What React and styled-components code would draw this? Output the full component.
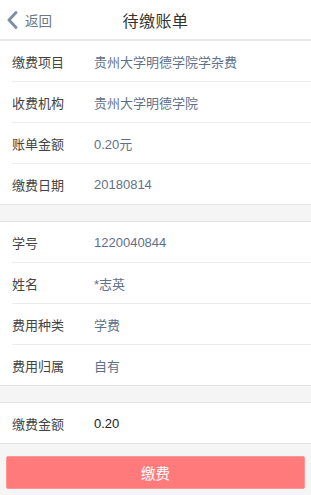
import React from 'react';
import styled, { createGlobalStyle } from 'styled-components';

const GlobalStyle = createGlobalStyle`
  html, body {
    margin: 0;
    padding: 0;
    background: #f5f5f5;
    font-family: "Liberation Sans", "Noto Sans CJK SC", sans-serif;
  }
`;

const Page = styled.div`
  width: 311px;
  height: 495px;
  background: #f5f5f5;
  overflow: hidden;
`;

const Header = styled.header`
  position: relative;
  height: 39px;
  background: #fff;
  border-bottom: 2px solid #e8e8e8;
  display: flex;
  align-items: center;
  justify-content: center;
`;

const Back = styled.div`
  position: absolute;
  left: 7px;
  top: 0;
  height: 100%;
  display: flex;
  align-items: center;
  gap: 7px;
  color: #6b7785;
  font-size: 13.5px;
`;

const Title = styled.h1`
  margin: 0;
  font-size: 16px;
  font-weight: normal;
  color: #333;
  letter-spacing: 0.5px;
`;

const Section = styled.section`
  background: #fff;
  border-top: 1px solid #e3e3e3;
  border-bottom: 1px solid #e3e3e3;
  margin-top: ${p => p.$gap}px;
  &:first-of-type {
    border-top: none;
  }
`;

const Row = styled.div`
  height: 40px;
  margin-left: 12px;
  display: flex;
  align-items: center;
  & + & {
    border-top: 1px solid #ececec;
  }
`;

const Label = styled.span`
  width: 82px;
  font-size: 13px;
  color: #444;
`;

const Value = styled.span`
  font-size: 13px;
  color: ${p => (p.$strong ? '#222' : '#5f718a')};
`;

const PayButton = styled.button`
  display: block;
  margin: 12px 6px 0;
  width: 299px;
  height: 33px;
  border: 1px solid #ff9595;
  border-radius: 2px;
  background: #ff7b7b;
  color: #fff;
  font-family: "Noto Sans CJK SC", sans-serif;
  font-size: 14.5px;
`;

const bill = [
  ['缴费项目', '贵州大学明德学院学杂费'],
  ['收费机构', '贵州大学明德学院'],
  ['账单金额', '0.20元'],
  ['缴费日期', '20180814'],
];

const student = [
  ['学号', '1220040844'],
  ['姓名', '*志英'],
  ['费用种类', '学费'],
  ['费用归属', '自有'],
];

const Rows = ({ items }) =>
  items.map(([label, value]) => (
    <Row key={label}>
      <Label>{label}</Label>
      <Value>{value}</Value>
    </Row>
  ));

export default function App() {
  return (
    <Page>
      <GlobalStyle />
      <Header>
        <Back>
          <svg width="11" height="18" viewBox="0 0 11 18">
            <path d="M9 1.6 L2 9 L9 16.4" fill="none" stroke="#7d8fa3" strokeWidth="2.9" strokeLinecap="round" strokeLinejoin="round" />
          </svg>
          <span>返回</span>
        </Back>
        <Title>待缴账单</Title>
      </Header>
      <Section $gap={0}>
        <Rows items={bill} />
      </Section>
      <Section $gap={16}>
        <Rows items={student} />
      </Section>
      <Section $gap={16}>
        <Row>
          <Label>缴费金额</Label>
          <Value $strong>0.20</Value>
        </Row>
      </Section>
      <PayButton type="button">缴费</PayButton>
    </Page>
  );
}
